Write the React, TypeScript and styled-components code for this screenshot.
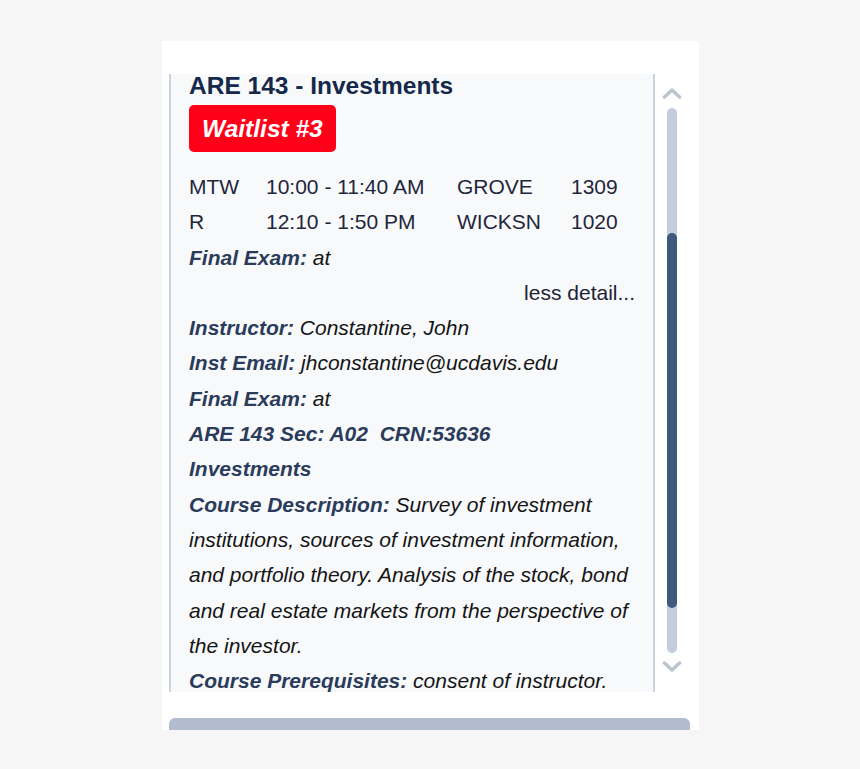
import React from 'react';
import styled, { createGlobalStyle } from 'styled-components';

interface IMeeting {
  days: string;
  time: string;
  building: string;
  room: string;
}

interface IDetail {
  label: string;
  value: string;
}

const meetings: IMeeting[] = [
  { days: 'MTW', time: '10:00 - 11:40 AM', building: 'GROVE', room: '1309' },
  { days: 'R', time: '12:10 - 1:50 PM', building: 'WICKSN', room: '1020' },
];

const details: IDetail[] = [
  { label: 'Instructor:', value: 'Constantine, John' },
  { label: 'Inst Email:', value: 'jhconstantine@ucdavis.edu' },
  { label: 'Final Exam:', value: 'at' },
  { label: 'ARE 143 Sec: A02\u00a0\u00a0CRN:53636', value: '' },
  { label: 'Investments', value: '' },
  {
    label: 'Course Description:',
    value:
      'Survey of investment institutions, sources of investment information, and portfolio theory. Analysis of the stock, bond and real estate markets from the perspective of the investor.',
  },
  { label: 'Course Prerequisites:', value: 'consent of instructor.' },
];

const Chevron: React.FC<{ down?: boolean }> = ({ down }) => (
  <ChevronSvg viewBox="0 0 20 11" width={20} height={11}>
    <polyline
      points={down ? '2.5,2 10,9 17.5,2' : '2.5,9 10,2 17.5,9'}
      fill="none"
      stroke="#b9c3d1"
      strokeWidth={3.5}
      strokeLinecap="round"
      strokeLinejoin="round"
    />
  </ChevronSvg>
);

const App: React.FC = () => {
  return (
    <>
      <GlobalStyle />
      <Frame>
        <Body>
          <Panel>
            <Title>ARE 143 - Investments</Title>
            <Badge>Waitlist #3</Badge>
            <Schedule>
              {meetings.map((m) => (
                <React.Fragment key={m.days}>
                  <Cell>{m.days}</Cell>
                  <Cell>{m.time}</Cell>
                  <Cell>{m.building}</Cell>
                  <Cell>{m.room}</Cell>
                </React.Fragment>
              ))}
            </Schedule>
            <Line>
              <Label>Final Exam:</Label> <Value>at</Value>
            </Line>
            <MoreLink>less detail...</MoreLink>
            {details.map((d) => (
              <Line key={d.label}>
                <Label>{d.label}</Label>
                {d.value && <Value> {d.value}</Value>}
              </Line>
            ))}
          </Panel>
          <ScrollColumn>
            <Chevron />
            <Track>
              <Thumb />
            </Track>
            <Chevron down />
          </ScrollColumn>
        </Body>
        <FooterBar />
      </Frame>
    </>
  );
};

const GlobalStyle = createGlobalStyle`
  body {
    margin: 0;
    background: #f6f6f6;
    font-family: "Liberation Sans", Arial, sans-serif;
  }
`;

const Frame = styled.div`
  margin: 41px 0 0 162px;
  width: 537px;
  height: 689px;
  background: #ffffff;
  padding-top: 33px;
  box-sizing: border-box;
  display: flex;
  flex-direction: column;
  overflow: hidden;
`;

const Body = styled.div`
  display: flex;
  height: 618px;
`;

const Panel = styled.div`
  margin-left: 7px;
  width: 486px;
  box-sizing: border-box;
  padding: 0 18px;
  background: #f8f9fb;
  border-left: 2px solid #cbd3e0;
  border-right: 2px solid #cbd3e0;
  overflow: hidden;
`;

const Title = styled.h2`
  margin: -2px 0 0;
  font-size: 24.5px;
  line-height: 28px;
  font-weight: 700;
  color: #15294a;
`;

const Badge = styled.div`
  margin-top: 5px;
  display: inline-flex;
  align-items: center;
  height: 47px;
  padding: 0 13px;
  border-radius: 5px;
  background: #ff0019;
  color: #ffffff;
  font-size: 24.5px;
  font-weight: 700;
  font-style: italic;
`;

const Schedule = styled.div`
  margin-top: 17px;
  display: grid;
  grid-template-columns: 77px 191px 114px auto;
  font-size: 21px;
  line-height: 35.3px;
  color: #23263a;
`;

const Cell = styled.span`
  white-space: nowrap;
`;

const Line = styled.div`
  font-size: 21px;
  line-height: 35.3px;
  font-style: italic;
  color: #151515;
`;

const Label = styled.span`
  font-weight: 700;
  color: #2b3c5b;
`;

const Value = styled.span`
  font-weight: 400;
`;

const MoreLink = styled.div`
  text-align: right;
  font-size: 21px;
  line-height: 35.3px;
  color: #1e2233;
`;

const ScrollColumn = styled.div`
  width: 22px;
  padding-left: 6px;
  display: flex;
  flex-direction: column;
  align-items: center;
  padding-top: 14px;
`;

const ChevronSvg = styled.svg`
  display: block;
  flex-shrink: 0;
`;

const Track = styled.div`
  margin: 9px 0 8px;
  width: 10px;
  height: 545px;
  border-radius: 5px;
  background: #c3cddc;
  position: relative;
  overflow: hidden;
`;

const Thumb = styled.div`
  position: absolute;
  left: 0;
  right: 0;
  top: 125px;
  height: 375px;
  border-radius: 5px;
  background: #3f5a7e;
`;

const FooterBar = styled.div`
  margin: 26px 9px 0 7px;
  height: 12px;
  background: #b1bdcf;
  border-radius: 6px 6px 0 0;
`;

export default App;
